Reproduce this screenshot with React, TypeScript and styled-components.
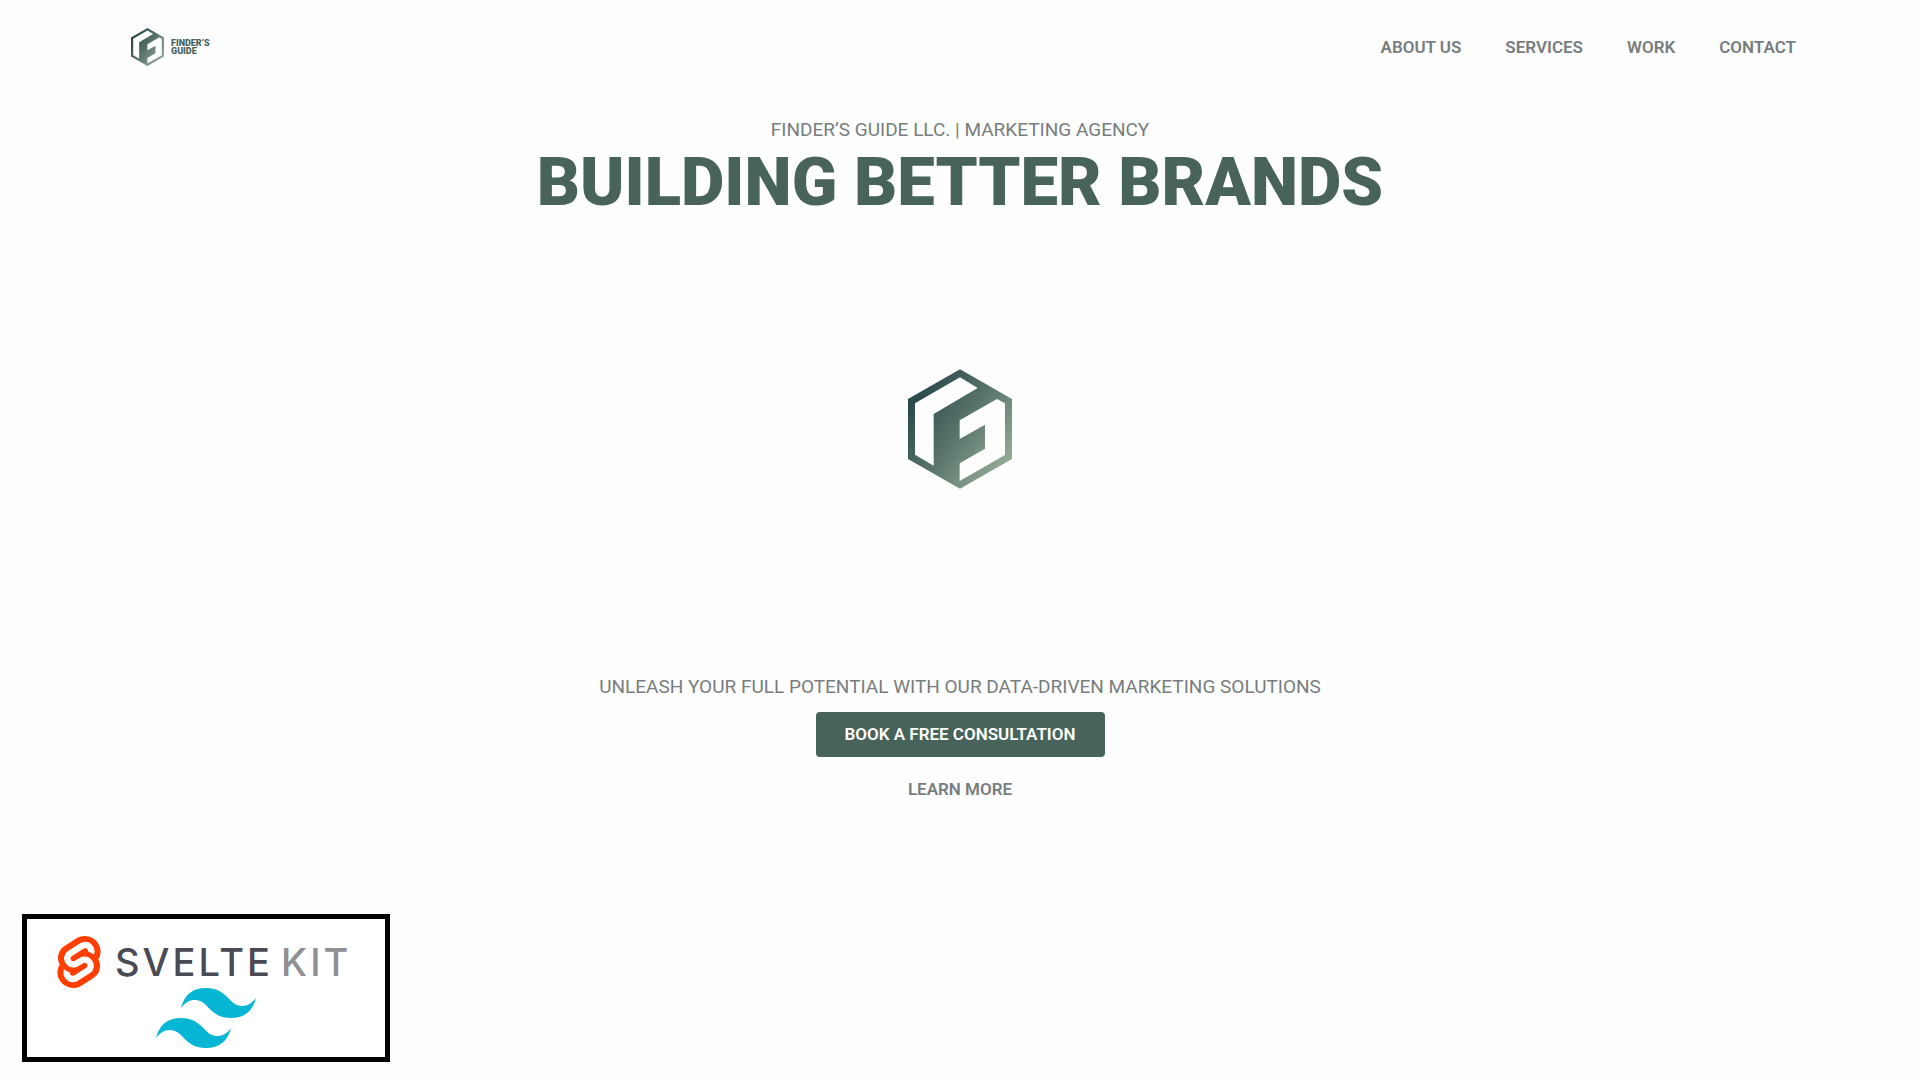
import React, { useId } from "react";
import styled, { createGlobalStyle } from "styled-components";
import { SiSvelte, SiTailwindcss } from "react-icons/si";

const GlobalStyle = createGlobalStyle`
  *, *::before, *::after { box-sizing: border-box; }
  body {
    margin: 0;
    background: #fefefe;
    color: #777d7f;
    font-family: Roboto, "Liberation Sans", sans-serif;
    text-transform: uppercase;
  }
`;

const Page = styled.div`
  display: flex;
  flex-direction: column;
  min-height: 100vh;
`;

const Header = styled.header`
  display: flex;
  align-items: center;
  justify-content: space-between;
  padding: 28px 124px 0 131px;
`;

const Brand = styled.a`
  display: flex;
  align-items: center;
  gap: 7px;
  color: #48635a;
  font-size: 9px;
  font-weight: 900;
  line-height: 8px;
  text-decoration: none;
`;

const BrandName = styled.span`
  display: flex;
  flex-direction: column;
`;

const Nav = styled.nav`
  display: flex;
  gap: 44px;
`;

const TextLink = styled.a`
  color: inherit;
  font-size: 17px;
  font-weight: 600;
  line-height: 24px;
  text-decoration: none;
`;

const Hero = styled.main`
  display: flex;
  flex-direction: column;
  align-items: center;
  padding: 50px 24px 24px;
  text-align: center;
`;

const Lead = styled.p`
  margin: 0;
  font-size: 19px;
  line-height: 28px;
`;

const Title = styled.h1`
  margin: 0;
  color: #48635a;
  font-size: 67px;
  font-weight: 900;
  line-height: 76px;
`;

const Emblem = styled.div`
  display: flex;
  padding: 149px 0 184px;
`;

const Actions = styled.div`
  display: flex;
  flex-direction: column;
  align-items: center;
  gap: 20px;
  padding-top: 11px;
`;

const BookButton = styled.button`
  padding: 11px 29px;
  border: 0;
  border-radius: 4px;
  background: #48635a;
  color: #fff;
  font: 600 17px/23px Roboto, "Liberation Sans", sans-serif;
  text-transform: uppercase;
  cursor: pointer;
`;

const Footer = styled.footer`
  display: flex;
  margin-top: auto;
  padding: 0 22px 18px;
`;

const StackBadge = styled.div`
  display: flex;
  flex-direction: column;
  align-items: center;
  padding: 17px 26px 9px;
  border: 5px solid #000;
  background: #fff;
`;

const KitLogo = styled.div`
  display: flex;
  align-items: center;
  gap: 10px;
  padding-right: 8px;
`;

const Wordmark = styled.span`
  color: #4a4a55;
  font-family: Inter, Roboto, sans-serif;
  font-size: 38px;
  font-weight: 500;
  line-height: 52px;
  letter-spacing: 3px;
`;

const WordmarkLight = styled.span`
  margin-left: 8px;
  color: #8f8f96;
`;

const TailwindMark = styled(SiTailwindcss)`
  width: 100px;
  height: 60px;
  color: #06b6d4;
`;

function HexLogo({ width, height }: { width: number; height: number }) {
  const id = useId();
  return (
    <svg width={width} height={height} viewBox="54 58 312 358" aria-hidden="true">
      <defs>
        <linearGradient id={id} gradientUnits="userSpaceOnUse" x1="70" y1="130" x2="350" y2="330">
          <stop offset="0" stopColor="#2a474a" />
          <stop offset="0.5" stopColor="#57736a" />
          <stop offset="1" stopColor="#91a994" />
        </linearGradient>
      </defs>
      <path
        fill={`url(#${id})`}
        fillRule="evenodd"
        d="M210 58 366 147V327L210 416 54 327V147ZM75 160V314L131 347V192L263 114 210 82ZM209 211V267L285 224V296L209 340V393L345 315V160L321 147Z"
      />
    </svg>
  );
}

const links = ["About us", "Services", "Work", "Contact"];

export default function App() {
  return (
    <Page>
      <GlobalStyle />
      <Header>
        <Brand href="#">
          <HexLogo width={33} height={38} />
          <BrandName>
            <span>Finder’s</span>
            <span>Guide</span>
          </BrandName>
        </Brand>
        <Nav>
          {links.map((label) => (
            <TextLink key={label} href="#">{label}</TextLink>
          ))}
        </Nav>
      </Header>
      <Hero>
        <Lead>Finder’s Guide LLC. | Marketing Agency</Lead>
        <Title>Building Better Brands</Title>
        <Emblem>
          <HexLogo width={104} height={120} />
        </Emblem>
        <Lead>Unleash your full potential with our data-driven marketing solutions</Lead>
        <Actions>
          <BookButton type="button">Book a free consultation</BookButton>
          <TextLink href="#">Learn more</TextLink>
        </Actions>
      </Hero>
      <Footer>
        <StackBadge>
          <KitLogo>
            <SiSvelte size={52} color="#ff3e00" />
            <Wordmark>
              Svelte<WordmarkLight>Kit</WordmarkLight>
            </Wordmark>
          </KitLogo>
          <TailwindMark viewBox="0 4.8 24 14.4" />
        </StackBadge>
      </Footer>
    </Page>
  );
}
